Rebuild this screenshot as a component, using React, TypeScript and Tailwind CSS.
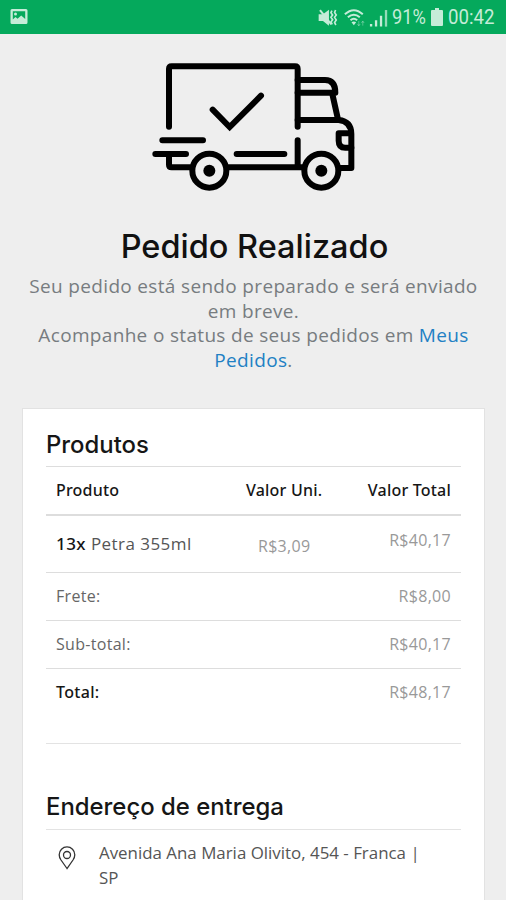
import { ReactNode } from 'react';

interface Summary {
  label: string;
  value: string;
  bold?: boolean;
}

const summary: Summary[] = [
  { label: 'Frete:', value: 'R$8,00' },
  { label: 'Sub-total:', value: 'R$40,17' },
  { label: 'Total:', value: 'R$48,17', bold: true },
];

function StatusBar() {
  return (
    <header className="flex h-[34px] items-center justify-between bg-[#05a95c] pr-[11px] pl-[10px] text-[#c5ecd8]">
      <svg viewBox="0 0 18 18" className="h-[18px] w-[18px]">
        <path
          fill="currentColor"
          fillRule="evenodd"
          d="M2 1h14a1.500 1.500 0 0 1 1.500 1.500v12a1.500 1.500 0 0 1-1.500 1.500H2a1.500 1.500 0 0 1-1.500-1.500v-12A1.500 1.500 0 0 1 2 1zm.8 2.200v8.300l2.700-2.500 2 1.700 3.700-3.200 4 3.500V3.200zM5.500 4.500a1.500 1.500 0 1 1 0 3 1.500 1.500 0 0 1 0-3z"
        />
      </svg>
      <div className="flex h-full items-center">
        <svg viewBox="45 0 220 102" className="h-[34px] w-[73px]" fill="none" stroke="currentColor">
          <path d="M50 43h13l18-14v48L63 63H50z" fill="currentColor" stroke="none" />
          <path d="M54 30l34 43" strokeWidth="6" />
          <path d="M90 32l-3 6 5 7-5 7 5 7-5 7 4 7M101 30l-3 7 5 8-5 7 5 8-5 8 4 7" strokeWidth="5" />
          <path d="M129 43q27-25 54 0M138 52q18-16 36 0M146 61q10-9 20 0" strokeWidth="6" />
          <path d="M149 67q7-5 14 0l-7 9z" fill="currentColor" stroke="none" />
          <path d="M171 63v14M167 72l4 6 4-6M183 77V64M179 69l4-6 4 6" strokeWidth="3" opacity=".4" />
          <path d="M208 80V72M223 80V61M238 80V47" strokeWidth="7" />
          <path d="M253 80V30" strokeWidth="7" opacity=".75" />
        </svg>
        <span className="ml-[2px] w-[35px] origin-left scale-x-[0.89] font-['Roboto',sans-serif] text-[20.5px] leading-[34px] whitespace-nowrap">
          91%
        </span>
        <svg viewBox="0 0 12 18" className="ml-[4px] h-[18px] w-[12px]" fill="currentColor">
          <path d="M4 0h4v2h3a1 1 0 0 1 1 1v14a1 1 0 0 1-1 1H1a1 1 0 0 1-1-1V3a1 1 0 0 1 1-1h3z" />
        </svg>
        <span className="ml-[5px] w-[47px] origin-left scale-x-[0.91] font-['Roboto',sans-serif] text-[20.5px] leading-[34px] whitespace-nowrap">
          00:42
        </span>
      </div>
    </header>
  );
}

function Truck() {
  return (
    <svg
      viewBox="0 0 690 450"
      className="mt-[16px] ml-[140px] block h-[150px] w-[230px]"
      fill="none"
      stroke="#000"
      strokeWidth="18"
      strokeLinecap="round"
      strokeLinejoin="round"
    >
      <path d="M87 230V57q0-8 8-8h370q8 0 8 8v173" />
      <path d="M218 179l51 52 94-94" strokeLinejoin="miter" />
      <path d="M67 271h122M46 312h92M290 312h143M87 312v32q0 8 8 8h55M266 352h222M473 271v81" />
      <path d="M473 90h82q31 0 31 38H473M577 132l17 76M473 210h123q38 4 38 42v102h-32" />
      <path d="M632 250h-36v22q0 21 20 21h18" />
      <circle cx="208" cy="362" r="51" />
      <circle cx="544" cy="362" r="51" />
      <circle cx="208" cy="362" r="18" fill="#000" stroke="none" />
      <circle cx="544" cy="362" r="18" fill="#000" stroke="none" />
    </svg>
  );
}

function SectionTitle({ children }: { children: ReactNode }) {
  return (
    <h2 className="font-['Inter',sans-serif] text-[23.9px] leading-[34px] font-medium whitespace-nowrap text-[#161616]">
      {children}
    </h2>
  );
}

export default function App() {
  return (
    <div className="h-[900px] w-[506px] overflow-hidden bg-[#eee] font-['Open_Sans','Noto_Sans',sans-serif]">
      <StatusBar />
      <Truck />

      <h1 className="mt-[27px] text-center font-['Inter',sans-serif] text-[32.5px] leading-[40px] font-medium whitespace-nowrap text-[#111]">
        <span className="ml-[3px]">Pedido Realizado</span>
      </h1>
      <p className="mt-[7px] pl-[1px] text-center text-[19px] leading-[24.5px] tracking-[0.33px] whitespace-nowrap text-[#777c80]">
        Seu pedido está sendo preparado e será enviado
        <br />
        em breve.
        <br />
        Acompanhe o status de seus pedidos em <a className="text-[#2180c4]">Meus</a>
        <br />
        <a className="text-[#2180c4]">Pedidos</a>.
      </p>

      <main className="mt-[36px] ml-[22px] h-[520px] w-[463px] border border-[#e2e2e2] bg-white px-[23px] pt-[19px]">
        <SectionTitle>Produtos</SectionTitle>
        <div className="mt-[4px] flex h-[50px] items-center border-t border-b-2 border-[#ddd] px-[10px] pb-[2px] font-['Noto_Sans',sans-serif] text-[16px] font-medium tracking-[0.2px] text-[#161616]">
          <span className="w-[190px]">Produto</span>
          <span className="w-[77px] whitespace-nowrap">Valor Uni.</span>
          <span className="ml-auto whitespace-nowrap">Valor Total</span>
        </div>
        <div className="flex h-[57px] items-center border-b border-[#ddd] px-[10px] text-[16px] tracking-[0.3px] text-[#999]">
          <span className="w-[202px] text-[17px] tracking-[0.45px] text-[#555]">
            <b className="font-['Noto_Sans',sans-serif] font-medium text-[#161616]">13x</b> Petra 355ml
          </span>
          <span className="mt-[3px]">R$3,09</span>
          <span className="mb-[8px] ml-auto">R$40,17</span>
        </div>
        {summary.map((row) => (
          <div
            key={row.label}
            className={
              row.bold
                ? 'flex h-[75px] items-start justify-between border-b border-[#e3e3e3] px-[10px] pt-[11px] text-[16px] tracking-[0.3px] text-[#999]'
                : 'flex h-[48px] items-center justify-between border-b border-[#ddd] px-[10px] pb-[2px] text-[16px] tracking-[0.3px] text-[#999]'
            }
          >
            <span className={row.bold ? "font-['Noto_Sans',sans-serif] font-medium text-[#161616]" : 'text-[#666]'}>
              {row.label}
            </span>
            <span>{row.value}</span>
          </div>
        ))}

        <div className="mt-[46px]">
          <SectionTitle>Endereço de entrega</SectionTitle>
        </div>
        <div className="mt-[5px] flex border-t border-[#e3e3e3] pt-[10px]">
          <svg viewBox="0 0 18 24" className="mt-[6px] ml-[12px] h-[24px] w-[18px]" fill="none" stroke="#333" strokeWidth="1.3">
            <path d="M9 22.500L3 14C1.800 12.200 1.200 10.500 1.200 8.700a7.800 7.800 0 0 1 15.600 0C16.800 10.500 16.200 12.200 15 14z" />
            <circle cx="9" cy="9" r="3.500" />
          </svg>
          <p className="ml-[23px] text-[16.9px] leading-[25px] whitespace-nowrap text-[#555]">
            Avenida Ana Maria Olivito, 454 - Franca |
            <br />
            SP
          </p>
        </div>
      </main>
    </div>
  );
}
